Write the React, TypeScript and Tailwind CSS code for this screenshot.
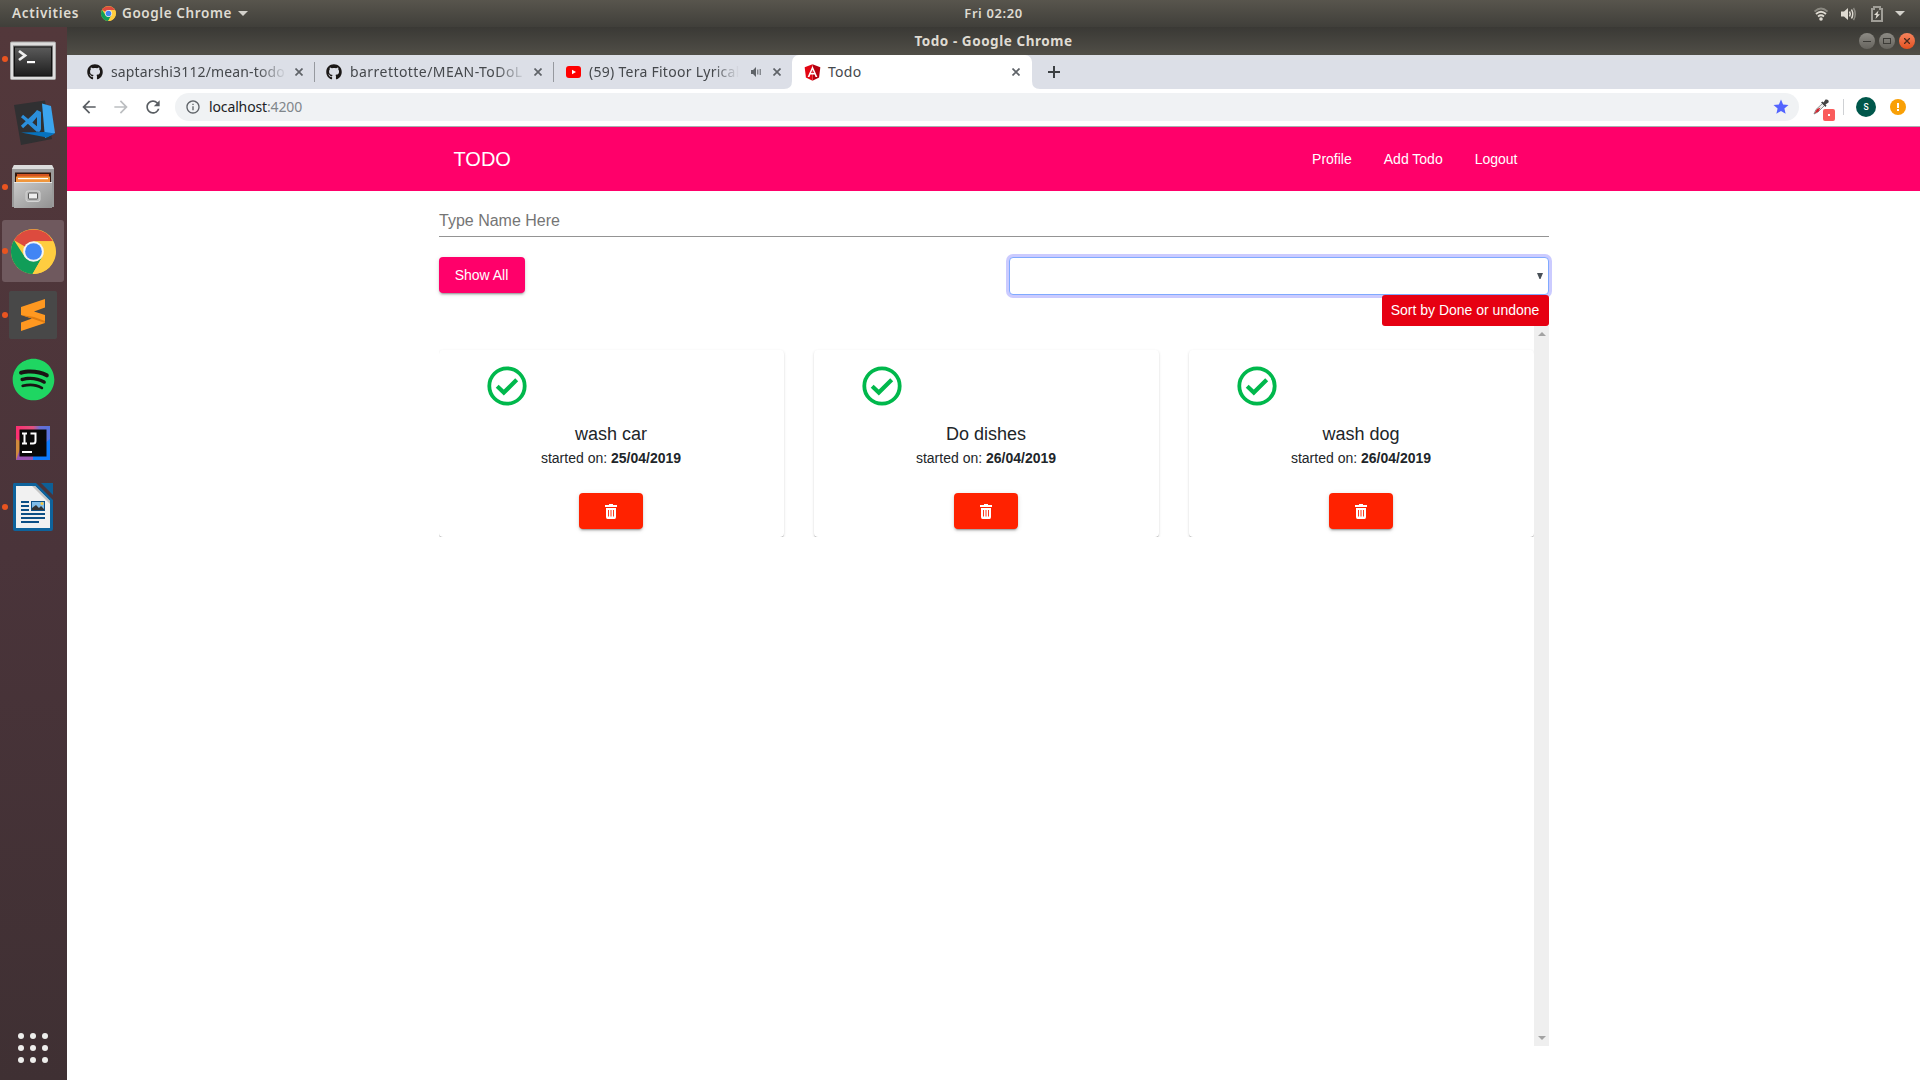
import React from "react";
import { FaGithub } from "react-icons/fa";
import { MdArrowBack, MdArrowForward, MdRefresh, MdStar, MdInfoOutline } from "react-icons/md";
import { FaSpotify } from "react-icons/fa";

const ubuntu = "font-['Noto_Sans',sans-serif]";

function ChromeLogo({ className }: { className: string }) {
  return (
    <svg viewBox="0 0 48 48" className={className}>
      <circle cx="24" cy="24" r="24" fill="#ffcd40" />
      <path d="M24 24 L3.2 12 A24 24 0 0 1 44.8 13 L24 13 Z" fill="#dd4b3e" />
      <path d="M3.2 12 A24 24 0 0 0 23 48 L33.5 29.5 L24 24 L14.5 29.5 Z" fill="#109d58" />
      <path d="M24 13 H44.8 A24 24 0 0 1 23 48 L33.5 29.5 A11 11 0 0 0 24 13Z" fill="#ffcd40" />
      <circle cx="24" cy="24" r="11" fill="#f4f4f4" />
      <circle cx="24" cy="24" r="8.9" fill="#4285f4" />
    </svg>
  );
}

function Terminal() {
  return (
    <svg viewBox="0 0 48 48" className="size-12">
      <defs>
        <linearGradient id="tm" x1="0" y1="0" x2="0" y2="1">
          <stop offset="0" stopColor="#5a5a5a" />
          <stop offset="1" stopColor="#1f1f1f" />
        </linearGradient>
      </defs>
      <rect x="1.5" y="7" width="45" height="37.500" rx="1" fill="#dedede" stroke="#a9a9a9" />
      <rect x="4" y="10.5" width="40" height="31" fill="#777" />
      <rect x="5" y="11.5" width="38" height="30" fill="#111" />
      <rect x="6" y="12.5" width="36" height="28" fill="url(#tm)" />
      <path d="M10 16 L16 20.500 L10 25" fill="none" stroke="#eee" strokeWidth="2.8" />
      <rect x="18" y="26" width="8" height="2.2" fill="#fff" />
    </svg>
  );
}

function VsCode() {
  return (
    <svg viewBox="0 0 48 48" className="size-12">
      <path d="M5 6 L36 1.500 L43 40 L12 46 Z" fill="#303032" />
      <path d="M13 17 L31 32 M13 28 L29 13" stroke="#2b8fdc" strokeWidth="3.2" fill="none" />
      <path d="M28 11 L32 13 V30 L28 33 L18 24 Z M28 18 L23 24 L28 28Z" fill="#2b8fdc" fillRule="evenodd" />
      <path d="M33 4.500 L42 7 L46 34 L36 39 Z" fill="#3ba4ee" />
      <path d="M12 33.500 L36 33 L46 34.500 L38 38.500 Z" fill="#0672bd" />
    </svg>
  );
}

function Files() {
  return (
    <svg viewBox="0 0 48 48" className="size-12">
      <defs>
        <linearGradient id="fl" x1="0" y1="0" x2="1" y2="1">
          <stop offset="0" stopColor="#c9c9c9" />
          <stop offset="1" stopColor="#929292" />
        </linearGradient>
      </defs>
      <path d="M5 2 H43 L45 6 V44 H3 V6 Z" fill="#9b9b9b" />
      <path d="M5 2 H43 L45 6 H3 Z" fill="#dcdcdc" />
      <rect x="6" y="9.500" width="36" height="11" fill="#33190f" />
      <rect x="8" y="11" width="32" height="4" fill="#d4541f" />
      <rect x="7" y="13.500" width="34" height="7" fill="#f0963c" />
      <rect x="9" y="15" width="30" height="1.200" fill="#fff" />
      <path d="M5 19 H43 V45 H5 Z" fill="url(#fl)" />
      <path d="M5 19.500 H43" stroke="#e6e6e6" />
      <rect x="17" y="28" width="14" height="10.500" rx="2" fill="#b9b9b9" stroke="#d5d5d5" />
      <rect x="19.500" y="30" width="9" height="6" rx="0.500" fill="#eee" stroke="#555" />
    </svg>
  );
}

function Sublime() {
  return (
    <svg viewBox="0 0 48 48" className="size-12">
      <rect width="48" height="48" rx="2" fill="#484848" />
      <path d="M12 16 L36 8 V16.500 L25 20.500 L36 24 V32 L12 40 V31.500 L23 27.500 L12 24 Z" fill="#ff9820" />
      <path d="M12 24 L23 27.500 L36 32 L36 30 L25 26 Z" fill="#dd7a10" />
    </svg>
  );
}

function Idea() {
  return (
    <svg viewBox="0 0 48 48" className="size-12">
      <defs>
        <linearGradient id="ij" x1="0" y1="0" x2="1" y2="0">
          <stop offset="0" stopColor="#fe2d70" />
          <stop offset="0.500" stopColor="#e0527e" />
          <stop offset="0.700" stopColor="#6b6fd4" />
          <stop offset="1" stopColor="#5572dd" />
        </linearGradient>
      </defs>
      <rect x="7" y="7" width="34" height="34" fill="url(#ij)" />
      <path d="M7 20 L15 24 L11 41 H7 Z" fill="#d08a3c" />
      <path d="M7 41 L11 30 L24 36 V41 Z" fill="#9a55b0" />
      <path d="M24 41 V34 L41 20 V41 Z" fill="#0e7bfa" />
      <rect x="10.500" y="10.500" width="27" height="27" fill="#090909" />
      <path d="M13 14.500 H18 M15.500 14.500 V24.500 M13 24.500 H18 M21.500 14.500 H26.500 V22 Q26.500 24.500 24 24.500 H21" stroke="#fff" strokeWidth="2" fill="none" />
      <rect x="13" y="32" width="10" height="2" fill="#fff" />
    </svg>
  );
}

function Writer() {
  return (
    <svg viewBox="0 0 48 48" className="size-12">
      <path d="M5 0 H27 L44 17 V46 Q44 48 42 48 H6 Q4 48 4 46 V2 Q4 0 5 0 Z" fill="#0e639c" />
      <path d="M32 0 H44 V12 Z" fill="#0e5f96" />
      <path d="M7 3 H26 L41 18 V45 H7 Z" fill="#f1f1f1" />
      <path d="M26 3 L41 18 V21 L23 3Z" fill="#c4c4c4" />
      <path d="M12 19 H20 M12 23 H20 M12 27 H20 M12 31 H36 M12 35 H36 M12 39 H30" stroke="#0b4f86" strokeWidth="2" />
      <rect x="22.500" y="18.500" width="13" height="9" fill="#7fbce8" stroke="#0b4f86" />
      <path d="M23 27 V25 L27 22 L30 25 L32 23 L35 26 V27 Z" fill="#333" />
      <circle cx="33" cy="20.500" r="1.500" fill="#f4c542" />
    </svg>
  );
}

const dock = [
  { key: "terminal", icon: <Terminal />, running: true },
  { key: "code", icon: <VsCode />, running: false },
  { key: "files", icon: <Files />, running: true },
  { key: "chrome", icon: <ChromeLogo className="size-[45px]" />, running: true, active: true },
  { key: "sublime", icon: <Sublime />, running: true },
  {
    key: "spotify",
    icon: (
      <span className="flex size-10 items-center justify-center rounded-full bg-[#191414]">
        <FaSpotify className="size-[43px] shrink-0 text-[#1fd662]" />
      </span>
    ),
    running: false,
  },
  { key: "idea", icon: <Idea />, running: false },
  { key: "writer", icon: <Writer />, running: true },
];

function Dock() {
  return (
    <aside className="flex w-[67px] shrink-0 flex-col justify-between bg-gradient-to-b from-[#53383b] via-[#4a343a] to-[#3f3033]">
      <div className="flex flex-col">
        {dock.map((d) => (
          <div key={d.key} className="flex h-16 items-center">
            <div className={`relative ml-[2px] flex size-[62px] items-center justify-center rounded-[3px] ${d.active ? "bg-[#6f595e]" : ""}`}>
              {d.running && <span className="absolute left-0 size-[6px] rounded-full bg-[#e95420]" />}
              {d.icon}
            </div>
          </div>
        ))}
      </div>
      <div className="mb-[17px] ml-[18px] grid w-[30px] grid-cols-3 gap-[6px]">
        {Array.from({ length: 9 }, (_, i) => (
          <span key={i} className="size-[6px] rounded-full bg-[#eeeeec]" />
        ))}
      </div>
    </aside>
  );
}

function Caret() {
  return (
    <svg viewBox="0 0 10 5" className="h-[5px] w-[10px]">
      <path d="M0 0H10L5 5Z" fill="#d3d1cb" />
    </svg>
  );
}

function TopBar() {
  return (
    <div className={`flex h-[27px] items-center bg-gradient-to-b from-[#58554d] to-[#403f3a] text-[13.500px] leading-none font-semibold text-[#dfdbd2] ${ubuntu}`}>
      <div className="flex flex-1 items-center">
        <span className="ml-3 w-[69px] whitespace-nowrap pt-px tracking-[0.700px]">Activities</span>
        <ChromeLogo className="ml-5 size-[15px]" />
        <span className="ml-[6px] w-[111px] whitespace-nowrap pt-px tracking-[0.600px]">Google Chrome</span>
        <span className="ml-[5px]"><Caret /></span>
      </div>
      <span className="ml-[67px] whitespace-nowrap text-[13px] tracking-[0.600px]">Fri 02:20</span>
      <div className="flex flex-1 items-center justify-end">
        <svg viewBox="0 0 14 14" className="h-[14px] w-[14px]" fill="none" strokeWidth="1.800">
          <path d="M0.500 4.500 Q7 -1.500 13.500 4.500" stroke="#8a8880" />
          <path d="M2 7 Q7 2.500 12 7" stroke="#dfdbd2" />
          <path d="M4 9.500 Q7 7 10 9.500" stroke="#dfdbd2" />
          <circle cx="7" cy="12" r="1.800" fill="#dfdbd2" />
        </svg>
        <svg viewBox="0 0 16 14" className="ml-[13px] h-[14px] w-4" fill="none" strokeWidth="1.500">
          <path d="M0 4.500H3L7 1V13L3 9.500H0Z" fill="#dfdbd2" />
          <path d="M8.500 4.500Q10 7 8.500 9.500M10.500 2.500Q13 7 10.500 11.500" stroke="#dfdbd2" />
          <path d="M12.500 1Q16 7 12.500 13" stroke="#8a8880" />
        </svg>
        <svg viewBox="0 0 12 16" className="ml-[14px] h-4 w-3">
          <path d="M3 1H9V3H11V15H1V3H3Z" fill="none" stroke="#a09e97" strokeWidth="2" />
          <path d="M7.500 4.500L3 9H5.500L4.500 13L9 8.200H6.500Z" fill="#dfdbd2" />
        </svg>
        <span className="mr-[15px] ml-3"><Caret /></span>
      </div>
    </div>
  );
}

function TitleBar() {
  return (
    <div className={`flex h-7 items-center bg-gradient-to-b from-[#3a3935] to-[#504e47] text-[13.500px] leading-none font-bold text-[#dfdbd2] ${ubuntu}`}>
      <div className="w-[61px]" />
      <div className="flex-1 pt-[2px] text-center whitespace-nowrap tracking-[0.550px]">Todo - Google Chrome</div>
      <div className="flex w-[61px] gap-1">
        <span className="flex size-4 items-center justify-center rounded-full bg-gradient-to-b from-[#8d8b85] to-[#66645e]">
          <span className="h-px w-2 bg-[#3c3b37]" />
        </span>
        <span className="flex size-4 items-center justify-center rounded-full bg-gradient-to-b from-[#8d8b85] to-[#66645e]">
          <span className="h-[6px] w-2 border border-[#3c3b37]" />
        </span>
        <span className="flex size-4 items-center justify-center rounded-full bg-gradient-to-b from-[#f5835c] to-[#e2501c]">
          <svg viewBox="0 0 6 6" className="size-[6px]"><path d="M0 0L6 6M6 0L0 6" stroke="#4a2a1c" strokeWidth="1.300" /></svg>
        </span>
      </div>
    </div>
  );
}

function Close() {
  return (
    <svg viewBox="0 0 8 8" className="size-2 shrink-0"><path d="M0.500 0.500L7.500 7.500M7.500 0.500L0.500 7.500" stroke="#5f6368" strokeWidth="1.700" /></svg>
  );
}

const fade = "[mask-image:linear-gradient(to_right,black_83%,transparent)]";

function TabStrip() {
  return (
    <div className={`flex h-[34px] items-center bg-[#dcdfe7] text-[14px] leading-5 text-[#45484c] ${ubuntu}`}>
      <div className="flex h-5 w-[248px] items-center border-r border-[#96999f] pl-5">
        <FaGithub className="size-4 shrink-0 text-[#1b1817]" />
        <span className={`ml-2 w-[176px] overflow-hidden whitespace-nowrap tracking-[0.140px] ${fade}`}>saptarshi3112/mean-todo</span>
        <span className="ml-2"><Close /></span>
      </div>
      <div className="flex h-5 w-[239px] items-center border-r border-[#96999f] pl-[11px]">
        <FaGithub className="size-4 shrink-0 text-[#1b1817]" />
        <span className={`ml-2 w-[176px] overflow-hidden whitespace-nowrap tracking-[0.450px] ${fade}`}>barrettotte/MEAN-ToDoL</span>
        <span className="ml-2"><Close /></span>
      </div>
      <div className="flex h-full w-[238px] items-center pl-[12px]">
        <svg viewBox="0 0 15 12" className="h-3 w-[15px] shrink-0"><rect width="15" height="12" rx="3" fill="#f00" /><path d="M6 3.700L10 6L6 8.300Z" fill="#fff" /></svg>
        <span className={`ml-2 w-[150px] overflow-hidden whitespace-nowrap tracking-[0.270px] ${fade}`}>(59) Tera Fitoor Lyrical</span>
        <svg viewBox="0 0 10 10" className="ml-[12px] size-[10px] shrink-0"><path d="M0 3H2L5 0V10L2 7H0Z" fill="#5f6368" /><path d="M6.800 2.500V7.500M9.200 2V8" stroke="#5f6368" /></svg>
        <span className="ml-[12px]"><Close /></span>
      </div>
      <div className="flex h-full items-end">
        <svg viewBox="0 0 8 8" className="ml-[-8px] size-2"><path d="M8 0V8H0Q8 8 8 0Z" fill="#fff" /></svg>
        <div className="flex h-[34px] w-[240px] items-center rounded-t-[7px] bg-white pl-3">
          <svg viewBox="0 0 250 250" className="size-[17px]">
            <path d="M125 5L240 46L222 198L125 245Z" fill="#b5000f" />
            <path d="M125 5L10 46L28 198L125 245Z" fill="#e30613" />
            <path d="M125 30L53 190H80L94 154H156L170 190H197ZM146 132H104L125 81Z" fill="#fff" />
          </svg>
          <span className="ml-[7px] w-[184px] tracking-[0.300px]">Todo</span>
          <Close />
        </div>
        <svg viewBox="0 0 8 8" className="size-2"><path d="M0 0V8H8Q0 8 0 0Z" fill="#fff" /></svg>
      </div>
      <svg viewBox="0 0 12 12" className="ml-2 size-3"><path d="M6 0V12M0 6H12" stroke="#3c4043" strokeWidth="2" /></svg>
    </div>
  );
}

function Toolbar() {
  return (
    <div className={`flex h-[38px] items-center border-b border-[#a9adb0] bg-white pb-px text-[14px] text-[#202124] ${ubuntu}`}>
      <MdArrowBack className="ml-3 size-5 text-[#5a5e63]" />
      <MdArrowForward className="ml-3 size-5 text-[#bcbec1]" />
      <MdRefresh className="ml-3 size-5 text-[#5a5e63]" />
      <div className="ml-3 flex h-7 w-[1624px] items-center rounded-full bg-[#f0f2f4]">
        <MdInfoOutline className="ml-[10px] size-4 text-[#5f6368]" />
        <span className="ml-2 flex-1 pb-px tracking-[-0.130px]">localhost<span className="text-[#80868b]">:4200</span></span>
        <MdStar className="mr-[9px] size-[18px] text-[#5364ff]" />
      </div>
      <div className="relative ml-[14px] h-4 w-4">
        <svg viewBox="0 0 16 16" className="size-4">
          <path d="M1 15L3 10.500L9.500 4.500L11.500 6.500L5 13Z" fill="#eee" stroke="#777" strokeWidth="0.800" />
          <path d="M1.500 14.500L4 10L7.500 8.500L5.500 12.500Z" fill="#d3202c" />
          <path d="M8 3.500L12.500 8L13.500 6.500L12.500 5.500L15.500 3.500Q16.500 0 12.500 0.500L10.500 3.500L9.500 2.500Z" fill="#444" />
        </svg>
        <span className="absolute top-[10px] left-[10px] flex size-3 items-center justify-center rounded-[2px] bg-[#fa5c5c]"><span className="size-[2px] bg-white" /></span>
      </div>
      <span className="ml-[14px] h-4 w-px bg-[#cfd1d4]" />
      <span className="ml-[12px] flex size-5 items-center justify-center rounded-full bg-[#00574b] pt-px text-[8.500px] font-medium text-white font-['Roboto',sans-serif]">S</span>
      <span className="ml-[14px] flex size-4 flex-col items-center justify-center gap-px rounded-full bg-[#f9a006]">
        <span className="h-[5px] w-[2px] bg-white" /><span className="size-[2px] bg-white" />
      </span>
    </div>
  );
}

function CheckCircle() {
  return (
    <svg viewBox="0 0 40 40" className="size-10">
      <circle cx="20" cy="20" r="17.700" fill="none" stroke="#00b84c" strokeWidth="3.800" />
      <path d="M10.200 20.300L16.800 26.600L29.700 13.800" fill="none" stroke="#00b84c" strokeWidth="4.200" />
    </svg>
  );
}

function Trash() {
  return (
    <svg viewBox="0 0 12 15" className="h-[15px] w-3">
      <path d="M4 0H8V1H12V3H0V1H4Z" fill="#fff" />
      <path d="M1 4H11V13Q11 15 9.500 15H2.500Q1 15 1 13Z" fill="#fff" />
      <path d="M3.500 6V12.500M6 6V12.500M8.500 6V12.500" stroke="#ff2200" strokeWidth="0.900" />
    </svg>
  );
}

const raised = "shadow-[0_3px_1px_-2px_rgba(0,0,0,0.2),0_2px_2px_0_rgba(0,0,0,0.14),0_1px_5px_0_rgba(0,0,0,0.12)]";

const todos = [
  { name: "wash car", date: "25/04/2019" },
  { name: "Do dishes", date: "26/04/2019" },
  { name: "wash dog", date: "26/04/2019" },
];

function TodoApp() {
  return (
    <main className="flex flex-1 flex-col bg-white text-[14px] text-[#212529] font-['Liberation_Sans',Arial,sans-serif]">
      <header className="flex h-16 items-center bg-[#ff006a] text-white">
        <span className="ml-[386.500px] flex-1 text-[20px] leading-none">TODO</span>
        <nav className="mr-[402.500px] flex gap-8 leading-none">
          <span>Profile</span>
          <span>Add Todo</span>
          <span>Logout</span>
        </nav>
      </header>
      <div className="ml-[372px] flex w-[1110px] flex-col">
        <div className="flex h-[46px] items-center border-b border-[#949494] pt-[15px] text-[16px] leading-none text-[#757575]">Type Name Here</div>
        <div className="mt-5 flex h-[69px] items-start justify-between">
          <button className={`h-9 w-[86px] rounded bg-[#ff006a] pr-px text-white ${raised}`}>Show All</button>
          <div className="flex w-[540px] flex-col items-end">
            <div className="flex h-[38px] w-full items-center justify-end rounded border border-[#80aaff] bg-white pr-[5px] shadow-[0_0_0_3px_#cbcbff]">
              <svg viewBox="0 0 6 6" className="size-[6px]"><path d="M0 0H6L3.500 6H2.500Z" fill="#495057" /></svg>
            </div>
            <div className="relative flex h-[31px] w-[167px] items-center justify-center rounded-[3px] bg-[#e60012] pr-px text-white">Sort by Done or undone</div>
          </div>
        </div>
        <div className="flex h-[720px]">
          <div className="flex h-[211px] flex-1 gap-[30px] overflow-hidden pt-6">
            {todos.map((t) => (
              <article key={t.name} className="flex h-[187px] w-[345px] flex-col items-center rounded bg-white pr-px shadow-[0_2px_1px_-1px_rgba(0,0,0,0.2),0_1px_1px_0_rgba(0,0,0,0.14),0_1px_3px_0_rgba(0,0,0,0.12)]">
                <div className="mt-4 ml-[47.500px] self-start"><CheckCircle /></div>
                <h2 className="mt-[18px] text-[18px] leading-5">{t.name}</h2>
                <p className="mt-1 leading-5">started on: <b>{t.date}</b></p>
                <button className={`mt-[25px] flex h-9 w-16 items-center justify-center rounded bg-[#ff2200] ${raised}`}><Trash /></button>
              </article>
            ))}
          </div>
          <div className="flex w-[15px] flex-col items-center justify-between bg-[#efefef] pt-[6px] pb-[6px]">
            <svg viewBox="0 0 8 4" className="h-1 w-2"><path d="M4 0L8 4H0Z" fill="#a3a3a3" /></svg>
            <svg viewBox="0 0 8 4" className="h-1 w-2"><path d="M0 0H8L4 4Z" fill="#a3a3a3" /></svg>
          </div>
        </div>
      </div>
    </main>
  );
}

export default function App() {
  return (
    <div className="flex h-[1080px] w-[1920px] flex-col overflow-hidden">
      <TopBar />
      <div className="flex flex-1">
        <Dock />
        <div className="flex flex-1 flex-col">
          <TitleBar />
          <TabStrip />
          <Toolbar />
          <TodoApp />
        </div>
      </div>
    </div>
  );
}
